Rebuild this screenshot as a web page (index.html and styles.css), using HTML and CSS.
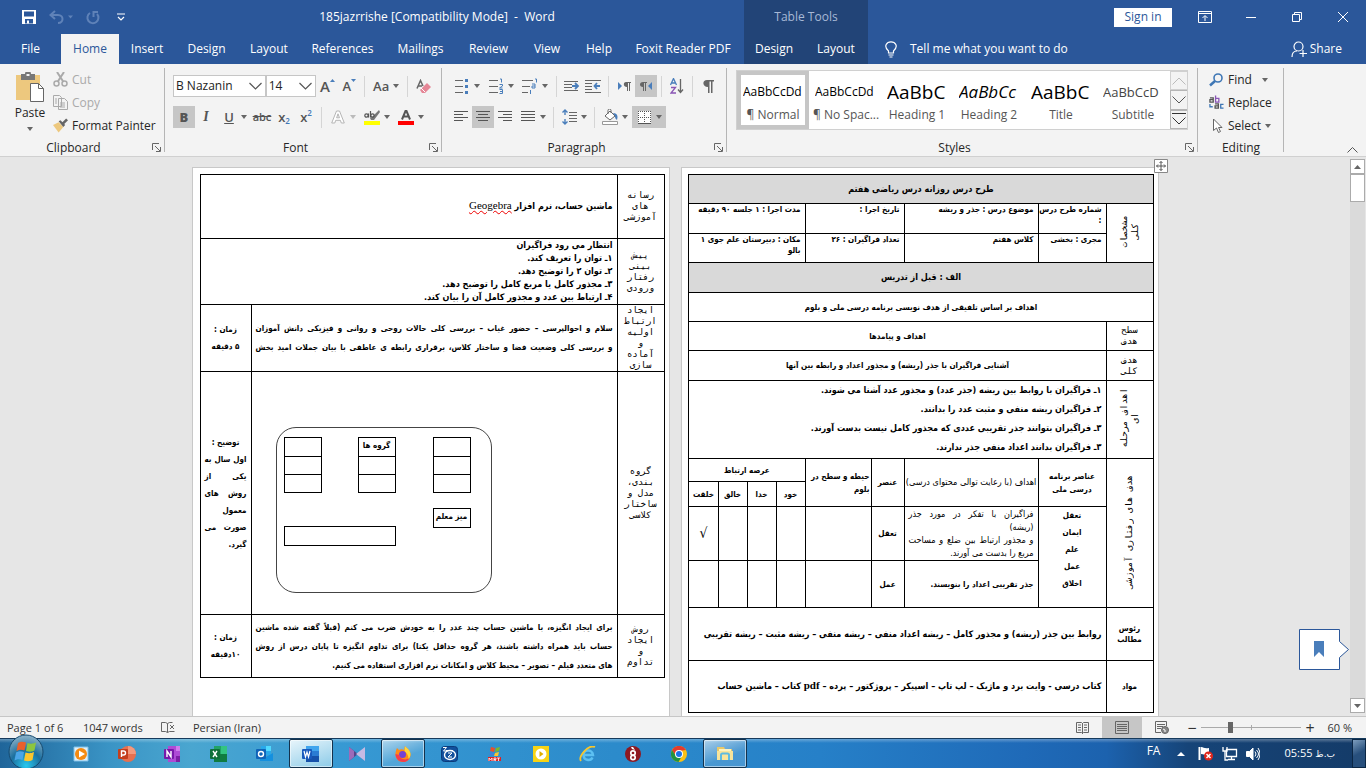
FILE: index.html
```html
<!DOCTYPE html>
<html lang="en">
<head>
<meta charset="utf-8">
<title>185jazrrishe [Compatibility Mode] - Word</title>
<link rel="stylesheet" href="styles.css">
</head>
<body>
<header class="header">
  <div class="title-left">
    <div class="quick">
      <button class="tb" aria-label="Save"><svg width="16" height="16" viewBox="0 0 16 16"><path d="M1 1h14v14H1z" fill="#fff"/><path d="M3 2.500h10v5H3zM4 10h8v4.500H4z" fill="#2b579a"/><path d="M6 11.500h2v3H6z" fill="#fff"/></svg></button>
      <button class="tb wide" aria-label="Undo"><svg width="26" height="16" viewBox="0 0 26 16" fill="none" stroke="#5f82b8" stroke-width="2"><path d="M7 2L2.500 6 7 10M3 6h7c6 0 6 8 0 8"/><path d="M20 6.500h5l-2.500 3z" fill="#5f82b8" stroke="none"/></svg></button>
      <button class="tb" aria-label="Repeat"><svg width="16" height="16" viewBox="0 0 16 16" fill="none" stroke="#5f82b8" stroke-width="2"><path d="M5 4a5.500 5.500 0 1 0 7 1M8 3h5M8.500 2v6"/></svg></button>
      <button class="tb more" aria-label="Customize"><svg width="10" height="8" viewBox="0 0 10 8" fill="none" stroke="#fff" stroke-width="1.200"><path d="M1 1h8M2 4l3 3 3-3"/></svg></button>
    </div>
    <div class="doc-title">185jazrrishe [Compatibility Mode]&nbsp; -&nbsp; Word</div>
  </div>
  <div class="context-title">Table Tools</div>
  <div class="window">
    <button class="signin">Sign in</button>
    <button class="wb" aria-label="Ribbon display"><svg width="14" height="12" viewBox="0 0 14 12" fill="none" stroke="#fff"><path d="M.5 .5h13v11H.5zM.5 2.500h13M7 10V5M4.500 7L7 4.500 9.500 7"/></svg></button>
    <button class="wb" aria-label="Minimize"><svg width="10" height="10" viewBox="0 0 10 10" stroke="#fff"><path d="M0 5.500h10"/></svg></button>
    <button class="wb" aria-label="Restore"><svg width="10" height="10" viewBox="0 0 10 10" fill="none" stroke="#fff"><path d="M.5 2.500h7v7h-7zM2.500 2V.5h7v7H8"/></svg></button>
    <button class="wb" aria-label="Close"><svg width="10" height="10" viewBox="0 0 10 10" stroke="#fff"><path d="M0 0l10 10M10 0L0 10"/></svg></button>
  </div>
  <nav class="tabs">
    <button>File</button><button class="active">Home</button><button>Insert</button><button>Design</button><button>Layout</button><button>References</button><button>Mailings</button><button>Review</button><button>View</button><button>Help</button><button>Foxit Reader PDF</button>
  </nav>
  <nav class="context-tabs"><button>Design</button><button>Layout</button></nav>
  <div class="tell">
    <button class="tellme"><svg width="12" height="17" viewBox="0 0 12 17" fill="none" stroke="#fff" stroke-width="1.200"><path d="M3.500 12V10C-2 5 2 .8 6 .8S14 5 8.500 10v2zM3.500 14h5M4.500 16h3"/></svg><span>Tell me what you want to do</span></button>
    <button class="share"><svg width="16" height="17" viewBox="0 0 16 17" fill="none" stroke="#fff" stroke-width="1.200"><circle cx="7.500" cy="5.500" r="4.500"/><path d="M1 16c0-4 2-6 5-6M12 9v7M8.500 12.500H16"/></svg><span>Share</span></button>
  </div>
</header>

<section class="ribbon">
  <div class="group clipboard">
    <div class="body">
      <button class="paste"><svg width="28" height="30" viewBox="0 0 28 30"><path d="M0 3h24v25H0z" fill="#edc87e"/><path d="M5 2h4a3 3 0 0 1 6 0h4v6H5z" fill="#777"/><path d="M10.500 2h3v2h-3z" fill="#f3f3f3"/><path d="M14.500 11.500h8l5 5v13h-13z" fill="#fff" stroke="#666"/><path d="M22.500 11.500v5h5" fill="none" stroke="#666"/></svg><span>Paste</span><i class="arrow"></i></button>
      <div class="cliplist">
        <button class="off"><svg width="15" height="15" viewBox="0 0 15 15" fill="none" stroke="#aaa" stroke-width="1.500"><path d="M4 0l6.500 10M11 0L4.500 10" stroke-width="2"/><circle cx="3.500" cy="11.500" r="2.500"/><circle cx="11.500" cy="11.500" r="2.500"/></svg>Cut</button>
        <button class="off"><svg width="15" height="15" viewBox="0 0 15 15" fill="#f3f3f3" stroke="#aaa"><path d="M.5 .5h6l2 2v9h-8zM5.500 3.500h6l3 3v8h-9zM2 4h2M2 6h2M2 8h2M7 8h5M7 10h5M7 12h5"/></svg>Copy</button>
        <button><svg width="15" height="15" viewBox="0 0 16 15"><path d="M0 7l6-3 5 5-5 6z" fill="#edc87e"/><path d="M6 3l2-1 5 5-2 2zM10 4l4-4 2 2-4 4z" fill="#666"/></svg>Format Painter</button>
      </div>
    </div>
    <div class="label">Clipboard</div><svg class="launch" width="9" height="9" viewBox="0 0 9 9" fill="none" stroke="#666"><path d="M.5 7V.5H7M3 3l5 5M8.500 4v4.500H4"/></svg>
  </div>
  <div class="group font">
    <div class="body rows">
      <div class="row">
        <label class="combo family"><select aria-label="Font"><option>B Nazanin</option></select><svg width="13" height="8" viewBox="0 0 13 8" fill="none" stroke="#555" stroke-width="1.200"><path d="M.5 1l6 6 6-6"/></svg></label>
        <label class="combo size"><select aria-label="Font size"><option>14</option></select><svg width="13" height="8" viewBox="0 0 13 8" fill="none" stroke="#555" stroke-width="1.200"><path d="M.5 1l6 6 6-6"/></svg></label>
        <button class="ic letter big">A<svg width="5" height="3" viewBox="0 0 5 3"><path d="M0 3l2.500-3L5 3z" fill="#4a7ebb"/></svg></button>
        <button class="ic letter">A<svg width="5" height="3" viewBox="0 0 5 3"><path d="M0 0l2.500 3L5 0z" fill="#4a7ebb"/></svg></button>
        <i class="sep"></i>
        <button class="ic drop letter"><span>Aa</span><i class="arrow"></i></button>
        <i class="sep"></i>
        <button class="ic" aria-label="Clear formatting"><svg width="15" height="15" viewBox="0 0 15 15"><path d="M1 9.500L4.500 1.500 7 7M2.500 7H6" fill="none" stroke="#666" stroke-width="1.500"/><path d="M4 11l7-7 4 4-6 6H6z" fill="#e58696"/><path d="M5 9l4 4" stroke="#fff"/></svg></button>
      </div>
      <div class="row">
        <button class="ic on letter"><b>B</b></button>
        <button class="ic letter serif"><b><em>I</em></b></button>
        <button class="ic drop letter"><span><u>U</u></span><i class="arrow"></i></button>
        <button class="ic letter small"><s>abc</s></button>
        <button class="ic letter">x<sub>2</sub></button>
        <button class="ic letter">x<sup>2</sup></button>
        <i class="sep"></i>
        <button class="ic drop" aria-label="Text effects"><svg width="14" height="14" viewBox="0 0 14 14" fill="#fff" stroke="#b5b5b5" stroke-width="1"><path d="M.7 13L5.500 1h3L13.300 13h-3L9.400 10.300H4.700L3.800 13zM5.600 7.800h2.900L7 3.800z"/></svg><i class="arrow dim"></i></button>
        <button class="ic drop" aria-label="Highlight"><svg width="16" height="15" viewBox="0 0 16 15"><path d="M0 11h16v4H0z" fill="#ff0"/><path d="M15 0l1 2-6 8H7l-1-2 2-1z" fill="#777"/><g fill="none" stroke="#555" stroke-width="1.200"><circle cx="2.500" cy="5.500" r="1.700"/><path d="M4.500 3.500V7.500M6.500 1v6.500"/><circle cx="8.500" cy="5.500" r="1.700"/></g></svg><i class="arrow"></i></button>
        <button class="ic drop" aria-label="Font color"><svg width="16" height="15" viewBox="0 0 16 15"><path d="M0 11h16v4H0z" fill="#f00"/><path d="M4 9.500L7.500 1h1L12 9.500M5.500 6.500h5" fill="none" stroke="#555" stroke-width="2"/></svg><i class="arrow"></i></button>
      </div>
    </div>
    <div class="label">Font</div><svg class="launch" width="9" height="9" viewBox="0 0 9 9" fill="none" stroke="#666"><path d="M.5 7V.5H7M3 3l5 5M8.500 4v4.500H4"/></svg>
  </div>
  <div class="group paragraph">
    <div class="body rows">
      <div class="row">
        <button class="ic drop" aria-label="Bullets"><svg width="14" height="16" viewBox="0 0 14 16"><path d="M0 2.500h8M0 8.500h8M0 14.500h8" stroke="#666"/><path d="M10 1h3v3h-3zM10 7h3v3h-3zM10 13h3v3h-3z" fill="#4a7ebb"/></svg><i class="arrow"></i></button>
        <button class="ic drop" aria-label="Numbering"><svg width="14" height="16" viewBox="0 0 14 16" fill="none" stroke="#666"><path d="M0 2.500h9M0 8.500h9M0 14.500h9"/><path d="M11 1h1.500v3.500M10.500 6.500h3v1.500l-3 2h3M10.500 11.500h3v4h-3M11 13.500h2" stroke="#4a7ebb"/></svg><i class="arrow"></i></button>
        <button class="ic drop" aria-label="Multilevel list"><svg width="16" height="16" viewBox="0 0 16 16" fill="none" stroke="#666"><path d="M0 2.500h11M0 8.500h8M0 14.500h6"/><path d="M13 1h1.500v3.500M10 6h3v4h-3V8h3M8.500 12v4" stroke="#4a7ebb"/></svg><i class="arrow"></i></button>
        <i class="sep"></i>
        <button class="ic" aria-label="Decrease indent"><svg width="16" height="13" viewBox="0 0 16 13" fill="none" stroke="#666"><path d="M0 1.500h14M0 4.500h8M0 7.500h8M0 10.500h14"/><path d="M8 6h6M11 3l3 3-3 3" stroke="#4a7ebb" stroke-width="1.800"/></svg></button>
        <button class="ic" aria-label="Increase indent"><svg width="16" height="13" viewBox="0 0 16 13" fill="none" stroke="#666"><path d="M0 .5h16M0 3.500h7M0 6.500h7M0 9.500h7M0 12.500h16"/><path d="M15 6H10M12 3L9.500 6l2.500 3" stroke="#4a7ebb" stroke-width="1.800"/></svg></button>
        <i class="sep"></i>
        <button class="ic" aria-label="Left to right"><svg width="14" height="10" viewBox="0 0 14 10"><path d="M1 1l4 4-4 4z" fill="#4a7ebb"/><path d="M9 1h5v1h-1v8h-1V2h-1v8h-1V6C6 6 6 1 9 1z" fill="#666"/></svg></button>
        <button class="ic on" aria-label="Right to left"><svg width="14" height="10" viewBox="0 0 14 10"><path d="M13 1L9 5l4 4z" fill="#4a7ebb"/><path d="M4 1h4v1H7v8H6V2H5v8H4V6C0 6 0 1 4 1z" fill="#666"/></svg></button>
        <i class="sep"></i>
        <button class="ic" aria-label="Sort"><svg width="14" height="16" viewBox="0 0 14 16" fill="none"><path d="M.5 7L3.500 .5 6.500 7M1.500 5h4" stroke="#4a7ebb" stroke-width="1.300"/><path d="M1 9.500h4.500L1 15h5" stroke="#8a55b5" stroke-width="1.300"/><path d="M10.500 1v13M8 11.500l2.500 3 2.500-3" stroke="#666" stroke-width="1.300"/></svg></button>
        <i class="sep"></i>
        <button class="ic" aria-label="Show marks"><svg width="11" height="13" viewBox="0 0 11 13"><path d="M4 0h7v1.500H9.500V13H8V1.500H6.500V13H5V7C-1 7-1 0 4 0z" fill="#666"/></svg></button>
      </div>
      <div class="row">
        <button class="ic" aria-label="Align left"><svg width="14" height="12" viewBox="0 0 14 12" stroke="#555"><path d="M0 .5h14M0 3.500h9M0 6.500h14M0 9.500h9"/></svg></button>
        <button class="ic on" aria-label="Center"><svg width="14" height="12" viewBox="0 0 14 12" stroke="#555"><path d="M0 .5h14M2 3.500h10M0 6.500h14M2 9.500h10"/></svg></button>
        <button class="ic" aria-label="Align right"><svg width="14" height="12" viewBox="0 0 14 12" stroke="#555"><path d="M0 .5h14M5 3.500h9M0 6.500h14M5 9.500h9"/></svg></button>
        <button class="ic drop" aria-label="Justify"><svg width="14" height="12" viewBox="0 0 14 12" stroke="#555"><path d="M0 .5h14M0 3.500h14M0 6.500h14M0 9.500h14"/></svg><i class="arrow"></i></button>
        <i class="sep tight"></i>
        <button class="ic drop" aria-label="Line spacing"><svg width="15" height="16" viewBox="0 0 15 16" fill="none" stroke="#666"><path d="M7 3.500h8M7 6.500h8M7 9.500h8M7 12.500h8"/><path d="M3 1v5M.5 3.500L3 1l2.500 2.500M3 15v-5M.5 12.500L3 15l2.500-2.500" stroke="#4a7ebb" stroke-width="1.400"/></svg><i class="arrow"></i></button>
        <i class="sep tight"></i>
        <button class="ic drop" aria-label="Shading"><svg width="17" height="16" viewBox="0 0 17 16" fill="#fff" stroke="#666"><path d="M.5 12.500h15v3H.5z" stroke="#999"/><path d="M3 7l5-5 5 5-5 4zM6 5V1.500a1.500 1.500 0 0 1 3 0V4"/><path d="M11 4c5 0 5 4 4 7-2-1-2-3-2-4z" fill="#4a7ebb" stroke="none"/></svg><i class="arrow"></i></button>
        <button class="ic drop on" aria-label="Borders"><svg width="13" height="13" viewBox="0 0 13 13" fill="none" stroke="#555"><path d="M0 0h13v13H0z" fill="#fff" stroke="none"/><path d="M0 .5h13M.5 0v13M6.500 0v13M12.500 0v13M0 6.500h13" stroke-dasharray="1 1"/><path d="M0 12.500h13"/></svg><i class="arrow"></i></button>
      </div>
    </div>
    <div class="label">Paragraph</div><svg class="launch" width="9" height="9" viewBox="0 0 9 9" fill="none" stroke="#666"><path d="M.5 7V.5H7M3 3l5 5M8.500 4v4.500H4"/></svg>
  </div>
  <div class="group styles">
    <div class="body">
      <div class="gallery">
        <button class="style picked"><span class="sample">AaBbCcDd</span><span>¶ Normal</span></button>
        <button class="style"><span class="sample">AaBbCcDd</span><span>¶ No Spac...</span></button>
        <button class="style"><span class="sample h1">AaBbC</span><span>Heading 1</span></button>
        <button class="style"><span class="sample h2">AaBbCc</span><span>Heading 2</span></button>
        <button class="style"><span class="sample h1">AaBbC</span><span>Title</span></button>
        <button class="style"><span class="sample sub">AaBbCcD</span><span>Subtitle</span></button>
        <div class="spin">
          <button class="off" aria-label="Up"><svg width="14" height="8" viewBox="0 0 14 8" fill="none" stroke="#bbb"><path d="M.5 7.500l6.500-6.500 6.500 6.500"/></svg></button>
          <button aria-label="Down"><svg width="14" height="8" viewBox="0 0 14 8" fill="none" stroke="#555"><path d="M.5 .5l6.500 6.500 6.500-6.500"/></svg></button>
          <button aria-label="More"><svg width="14" height="12" viewBox="0 0 14 12" fill="none" stroke="#333"><path d="M0 .5h14M.5 4.500l6.500 6.500 6.500-6.500"/></svg></button>
        </div>
      </div>
    </div>
    <div class="label">Styles</div><svg class="launch" width="9" height="9" viewBox="0 0 9 9" fill="none" stroke="#666"><path d="M.5 7V.5H7M3 3l5 5M8.500 4v4.500H4"/></svg>
  </div>
  <div class="group editing">
    <div class="body editlist">
      <button><svg width="15" height="14" viewBox="0 0 15 14" fill="none" stroke="#3f77b5"><circle cx="9" cy="5" r="4" stroke-width="1.600"/><path d="M6 8l-5 4.500" stroke-width="2.500"/></svg>Find<i class="arrow far"></i></button>
      <button><svg width="15" height="15" viewBox="0 0 16 15" fill="none" stroke-width="1.400"><g stroke="#555"><path d="M1 2.500h3.500V7H1V4.500h3.500M6.500 9h3.500v4.500H6.500V11h3.500"/></g><path d="M7 0v7h3.500V3H7" stroke="#8a55b5"/><path d="M15.500 9.500h-3v4h3M1 9v3h3" stroke="#3f77b5"/></svg>Replace</button>
      <button><svg width="15" height="16" viewBox="0 0 15 16"><path d="M4.500 1v11.500l3-2.500 2 4.500 2-1-2-4h3.500z" fill="#fff" stroke="#666"/></svg>Select<i class="arrow"></i></button>
    </div>
    <div class="label">Editing</div>
  </div>
  <button class="collapse" aria-label="Collapse"><svg width="11" height="6" viewBox="0 0 11 6" fill="none" stroke="#555"><path d="M.5 5.500l5-5 5 5"/></svg></button>
</section>

<main class="workspace">
  <div class="canvas">
    <article class="page" dir="rtl" lang="fa">
      <table class="plan">
        <colgroup><col class="c-side"><col class="c-main"><col class="c-time"></colgroup>
        <tr class="h64"><th>رسانه<br>های<br>آموزشی</th><td colspan="2" class="start large">ماشین حساب، نرم افزار <span class="latin typo">Geogebra</span></td></tr>
        <tr class="h65"><th>پیش<br>بینی<br>رفتار<br>ورودی</th><td colspan="2" class="start large l13">انتظار می رود فراگیران<br>۱ـ توان را تعریف کند.<br>۲ـ توان ۲ را توضیح دهد.<br>۳ـ مجذور کامل یا مربع کامل را توضیح دهد.<br>۴ـ ارتباط بین عدد و مجذور کامل آن را بیان کند.</td></tr>
        <tr class="h66"><th>ایجاد<br>ارتباط<br>اولیه<br>و<br>آماده<br>سازی</th><td class="just l19">سلام و احوالپرسی – حضور غیاب – بررسی کلی حالات روحی و روانی و فیزیکی دانش آموزان<br>و بررسی کلی وضعیت فضا و ساختار کلاس، برقراری رابطه ی عاطفی با بیان جملات امید بخش</td><td class="l17">زمان :<br>۵ دقیقه</td></tr>
        <tr class="h243"><th>گروه<br>بندی،<br>مدل و<br>ساختار<br>کلاسی</th><td>
          <div class="room" dir="ltr">
            <div class="desk d1"><i></i><i></i><i></i></div>
            <div class="desk d2"><i dir="rtl">گروه ها</i><i></i><i></i></div>
            <div class="desk d3"><i></i><i></i><i></i></div>
            <div class="desk d4"><i dir="rtl">میز معلم</i></div>
            <div class="desk d5"><i></i></div>
          </div></td><td class="just l17"><p>توضیح :</p>اول سال به<br>یکی از<br>روش های<br><span class="end">معمول</span>صورت می<br><span class="end">گیرد.</span></td></tr>
        <tr class="h63"><th>روش<br>ایجاد<br>و<br>تداوم</th><td class="just l19">برای ایجاد انگیزه، با ماشین حساب چند عدد را به خودش ضرب می کنم (قبلاً گفته شده ماشین<br>حساب باید همراه داشته باشند، هر گروه حداقل یکتا) برای تداوم انگیزه تا پایان درس از روش<br><span class="end">های متعدد فیلم – تصویر – محیط کلاس و امکانات نرم افزاری استفاده می کنیم.</span></td><td class="l17">زمان :<br>۱۰دقیقه</td></tr>
      </table>
    </article>
    <article class="page" dir="rtl" lang="fa">
      <svg class="handle" width="14" height="14" viewBox="0 0 14 14" fill="#fff" stroke="#888"><path d="M.5 .5h13v13H.5z"/><path d="M7 2.500v9M2.500 7h9M5.500 4L7 2.500 8.500 4M5.500 10L7 11.500 8.500 10M4 5.500L2.500 7 4 8.500M10 5.500L11.500 7 10 8.500" fill="none" stroke="#555"/></svg>
      <table class="plan">
        <colgroup><col class="c-side"><col class="c-a"><col class="c-b"><col class="c-c"><col class="c-d"><col class="c-e"><col class="c-e"><col class="c-e"><col class="c-e"></colgroup>
        <tr class="h29 shade"><td colspan="9" class="large">طرح درس روزانه درس ریاضی هفتم</td></tr>
        <tr class="h30 info"><th rowspan="2"><span class="vert">مشخصات<br>کلی</span></th><td>شماره طرح درس<br>:</td><td>موضوع درس : جذر و ریشه</td><td colspan="2">تاریخ اجرا :</td><td colspan="4">مدت اجرا : ۱ جلسه ۹۰ دقیقه</td></tr>
        <tr class="h29 info"><td>مجری : بخشی</td><td>کلاس هفتم</td><td colspan="2">تعداد فراگیران : ۲۶</td><td colspan="4">مکان : دبیرستان علم جوی ۱<br>بالو</td></tr>
        <tr class="h30 shade"><td colspan="9" class="large">الف : قبل از تدریس</td></tr>
        <tr class="h29"><td colspan="9">اهداف بر اساس تلفیقی از هدف نویسی برنامه درسی ملی و بلوم</td></tr>
        <tr class="h29"><th>سطح<br>هدف</th><td colspan="8">اهداف و پیامدها</td></tr>
        <tr class="h30"><th>هدف<br>کلی</th><td colspan="8">آشنایی فراگیران با جذر (ریشه) و مجذور اعداد و رابطه بین آنها</td></tr>
        <tr class="h78"><th><span class="vert">اهداف مرحله<br>ای</span></th><td colspan="8" class="start large top l19">۱ـ فراگیران با روابط بین ریشه (جذر عدد) و مجذور عدد آشنا می شوند.<br>۲ـ فراگیران ریشه منفی و مثبت عدد را بدانند.<br>۳ـ فراگیران بتوانند جذر تقریبی عددی که مجذور کامل نیست بدست آورند.<br>۳ـ فراگیران بدانند اعداد منفی جذر ندارند.</td></tr>
        <tr class="h23"><th rowspan="4"><span class="vert">هدف های رفتاری آموزشی</span></th><td rowspan="2">عناصر برنامه<br>درسی ملی</td><td rowspan="2" class="snug regular">اهداف (با رعایت توالی محتوای درسی)</td><td rowspan="2" class="snug">عنصر</td><td rowspan="2" class="start snug">حیطه و سطح در<br>بلوم</td><td colspan="4">عرصه ارتباط</td></tr>
        <tr class="h25"><td class="snug">خود</td><td class="snug">خدا</td><td class="snug">خالق</td><td class="snug">خلقت</td></tr>
        <tr class="h54"><td rowspan="2" class="top l17">تعقل<br>ایمان<br>علم<br>عمل<br>اخلاق</td><td class="just regular l13">فراگیران با تفکر در مورد جذر (ریشه)<br>و مجذور ارتباط بین ضلع و مساحت<br><span class="end">مربع را بدست می آورند.</span></td><td class="snug">تعقل</td><td></td><td></td><td></td><td></td><td class="check">√</td></tr>
        <tr class="h47"><td class="start">جذر تقریبی اعداد را بنویسند.</td><td class="snug">عمل</td><td></td><td></td><td></td><td></td><td></td></tr>
        <tr class="h53"><th class="plain">رئوس<br>مطالب</th><td colspan="8" class="start large">روابط بین جذر (ریشه) و مجذور کامل – ریشه اعداد منفی – ریشه منفی – ریشه مثبت – ریشه تقریبی</td></tr>
        <tr class="h52"><th class="plain">مواد</th><td colspan="8" class="start large">کتاب درسی - وایت برد و ماژیک – لپ تاپ – اسپیکر – پروژکتور – پرده – <span class="latin">pdf</span> کتاب – ماشین حساب</td></tr>
      </table>
    </article>
    <button class="bookmark" aria-label="Bookmark"><svg width="52" height="43" viewBox="0 0 52 43"><path d="M1.500 1.500h40v12l9 8-9 8v12h-40z" fill="#fff" stroke="#2b579a"/><path d="M16 13h10v16l-5-5-5 5z" fill="#4a7ebb"/></svg></button>
  </div>
  <div class="vscroll"><button aria-label="Scroll up"><svg width="7" height="4"><path d="M0 4l3.500-4L7 4z" fill="#666"/></svg></button><div class="track"><i class="thumb"></i></div><button aria-label="Scroll down"><svg width="7" height="4"><path d="M0 0l3.500 4L7 0z" fill="#666"/></svg></button></div>
</main>

<footer class="status">
  <span class="s-page">Page 1 of 6</span><span class="s-words">1047 words</span>
  <svg class="s-book" width="15" height="13" viewBox="0 0 15 13" fill="none" stroke="#666"><path d="M.5 1.500h4l2 1v9l-2-1h-4zM6.500 2.500l2-1h3M6.500 11.500l2-1h5M9 4l4 4M13 4L9 8"/></svg>
  <span>Persian (Iran)</span>
  <div class="views">
    <button aria-label="Read mode"><svg width="13" height="12" viewBox="0 0 13 12" fill="none" stroke="#666"><path d="M.5 .5h5l1 1 1-1h5v10h-5l-1 1-1-1h-5zM6.500 1v11M2 3h3M2 5.500h3M2 8h3M8 3h3M8 5.500h3M8 8h3"/></svg></button>
    <button class="on" aria-label="Print layout"><svg width="14" height="13" viewBox="0 0 14 13" fill="none" stroke="#666"><path d="M.5 .5h13v12H.5zM2 3.500h10M2 5.500h10M2 7.500h10M2 9.500h10"/></svg></button>
    <button aria-label="Web layout"><svg width="14" height="13" viewBox="0 0 14 13" fill="none" stroke="#666"><path d="M6 11.500H.5V.5h11V5M2 3.500h8M2 5.500h6M2 7.500h4"/><circle cx="10" cy="9" r="3.500" fill="#888"/><path d="M8 8l2 1v2" stroke="#fff"/></svg></button>
  </div>
  <div class="zoom"><button aria-label="Zoom out">−</button><input type="range" min="0" max="100" value="28" aria-label="Zoom"><button aria-label="Zoom in">+</button></div>
  <span class="s-pct">60 %</span>
</footer>

<div class="taskbar">
  <button class="start-orb" aria-label="Start"><svg width="36" height="34" viewBox="0 0 36 34"><defs><radialGradient id="orb" cx=".5" cy=".9" r=".9"><stop offset="0" stop-color="#27c9ef"/><stop offset=".5" stop-color="#1b6f9f"/><stop offset="1" stop-color="#8fb3c9"/></radialGradient></defs><circle cx="18" cy="18" r="17" fill="url(#orb)" stroke="#154a70"/><path d="M10 9c3-2 5-1.500 8-.5l-1.500 8c-3-1-5-1-8 .5z" fill="#e8602c"/><path d="M19.500 9c3 1 5 1 8.500-.5l-1.500 8c-3 1.500-5 1.500-8.500 .5z" fill="#8cc63f"/><path d="M8 18.500c3-1.500 5-1.500 8-.5l-1.500 8c-3-1-5-1-8 .5z" fill="#4aa5e8"/><path d="M17.500 18.500c3 1 5 1 8.500-.5L24.500 26c-3 1.500-5 1.500-8.500 .5z" fill="#fcc62d"/></svg></button>
  <div class="apps">
    <button aria-label="Media player"><svg width="16" height="16" viewBox="0 0 16 16"><path d="M1 1h14v14H1z" fill="#dff0fa" stroke="#7fc0e8"/><circle cx="8" cy="8" r="6" fill="#f58b12"/><path d="M6 4.500v7L12 8z" fill="#fff"/></svg></button>
    <button aria-label="PowerPoint"><svg width="18" height="16" viewBox="0 0 18 16"><circle cx="10" cy="8" r="8" fill="#e8704f"/><path d="M10 0a8 8 0 0 1 8 8h-8z" fill="#f5997c"/><rect y="3" width="10" height="10" rx="1" fill="#c43e1c"/><path d="M3.500 11V5h2a2 2 0 0 1 0 4h-2" fill="none" stroke="#fff" stroke-width="1.400"/></svg></button>
    <button aria-label="OneNote"><svg width="18" height="16" viewBox="0 0 18 16"><path d="M4 0h12v16H4z" fill="#ae4bd5"/><path d="M12 0h4v5h-4z" fill="#ce7ced"/><path d="M12 10h4v6h-4z" fill="#7d1fa5"/><rect y="3" width="10" height="10" rx="1" fill="#7719aa"/><path d="M3 11V5l4 6V5" fill="none" stroke="#fff" stroke-width="1.400"/></svg></button>
    <button aria-label="Excel"><svg width="18" height="16" viewBox="0 0 18 16"><path d="M4 0h13v16H4z" fill="#21a366"/><path d="M11 0h6v8h-6z" fill="#33c481"/><path d="M4 8h13v8H4z" fill="#107c41"/><rect y="3" width="10" height="10" rx="1" fill="#0f703b"/><path d="M3 5l4 6M7 5l-4 6" stroke="#fff" stroke-width="1.400"/></svg></button>
    <button aria-label="Outlook"><svg width="18" height="16" viewBox="0 0 18 16"><path d="M5 0h10v9H5z" fill="#28a8ea"/><path d="M4 8l6 3 7-4v8H4z" fill="#1490df"/><path d="M10 0h5v5h-5z" fill="#50d9ff"/><rect y="3" width="10" height="10" rx="1" fill="#0f64b8"/><circle cx="5" cy="8" r="2.500" fill="none" stroke="#fff" stroke-width="1.400"/></svg></button>
    <button class="open front" aria-label="Word"><svg width="18" height="16" viewBox="0 0 18 16"><path d="M4 0h13v5H4z" fill="#41a5ee"/><path d="M4 5h13v5H4z" fill="#2b7cd3"/><path d="M4 10h13v6H4z" fill="#1651aa"/><rect y="3" width="10" height="10" rx="1" fill="#185abd"/><path d="M2 5l1.500 6L5 6l1.500 5L8 5" fill="none" stroke="#fff" stroke-width="1.200"/></svg></button>
    <button aria-label="Media editor"><svg width="16" height="16" viewBox="0 0 16 16"><path d="M0 1l9 7-9 7z" fill="#54468c"/><path d="M16 1L7 8l9 7z" fill="#c5bae4"/><path d="M0 1l5 4v6l-5 4z" fill="#9d6bb9"/></svg></button>
    <button class="open" aria-label="Firefox"><svg width="16" height="16" viewBox="0 0 16 16"><path d="M10 0c1 2 5 3 5.500 8S12 16 8 16 0 13 .5 7C1 5 1 4 2 2l2 2c2-1 3-1 5 0z" fill="#ff8a16"/><path d="M10 0c1 2 5 3 5.500 8 0 2-1 4-2 5 0-4-2-6-4-8z" fill="#ffd53a"/><circle cx="7.500" cy="8.500" r="3.500" fill="#7541d4"/><path d="M.5 8c0 5 4 8 8 8 3 0 5-2 6-4-4 3-10 1-10-3z" fill="#f33c4e"/></svg></button>
    <button aria-label="Z client"><svg width="17" height="16" viewBox="0 0 17 16"><rect x=".5" y=".5" width="16" height="15" rx="3" fill="#12509c" stroke="#0a3b7c"/><ellipse cx="9" cy="9" rx="5.500" ry="4.500" fill="none" stroke="#fff" stroke-width="1.400"/><path d="M7 7h4l-4 4h4M2 1.500h3.500L2.500 5H6M5 4.500h7" fill="none" stroke="#fff"/></svg></button>
    <button aria-label="MRT"><svg width="14" height="16" viewBox="0 0 14 16"><path d="M3 1l4 1-1 4-4-1z" fill="#e8502c"/><path d="M8 2l4-1-1 4-4 1z" fill="#7ab82d"/><path d="M2 6l4 1-1 3-4-1z" fill="#3e83d8"/><path d="M7 7l4-1-1 4-4 0z" fill="#fcc62d"/><path d="M0 11h13v4H0z" fill="#d22"/><path d="M1 15v-3l1.500 2L4 12v3M6 15v-3h2v1.500H6L8 15M9 12h3M10.500 12v3" fill="none" stroke="#fff" stroke-width=".8"/></svg></button>
    <button aria-label="Player"><svg width="16" height="16" viewBox="0 0 16 16"><path d="M0 0h16v16H0z" fill="#f7d314"/><circle cx="8" cy="8" r="5.500" fill="#fff"/><path d="M6.500 5v6l4-3z" fill="#e0ad00"/></svg></button>
    <button aria-label="Internet Explorer"><svg width="17" height="16" viewBox="0 0 17 16" fill="none"><path d="M13.500 11.500c-2 4-9 3-9-2.500 0-6 9-6 9.500 0H5" stroke="#5cc0f2" stroke-width="2.500"/><path d="M2 15C-1 11 9-2 16 1" stroke="#f8c62c" stroke-width="1.800"/></svg></button>
    <button aria-label="Dictionary"><svg width="16" height="16" viewBox="0 0 16 16"><circle cx="8" cy="8" r="8" fill="#8e1821"/><g fill="none" stroke="#fff" stroke-width="1.700"><circle cx="8" cy="7" r="2.200"/><circle cx="8" cy="11.500" r="2.200"/></g><path d="M6 1h2l2 3-3-1z" fill="#fff"/></svg></button>
    <button aria-label="Chrome"><svg width="16" height="16" viewBox="0 0 16 16"><circle cx="8" cy="8" r="8" fill="#fbc116"/><path d="M1 4a8 8 0 0 1 14 0l-7 1-3 5z" fill="#e33b2e"/><path d="M1 4a8 8 0 0 0 6.500 12L11 10H5z" fill="#229342"/><circle cx="8" cy="8" r="4" fill="#fff"/><circle cx="8" cy="8" r="3" fill="#1a73e8"/></svg></button>
    <button class="open" aria-label="Explorer"><svg width="16" height="15" viewBox="0 0 16 15"><path d="M0 1h7l1 2h7v11H0z" fill="#e8c868"/><path d="M2 3h12v3H2z" fill="#fdf3c0"/><path d="M0 5h16v9H0z" fill="#f8e49b"/><path d="M4 14V9q0-1.500 1.500-1.500h5q1.500 0 1.500 1.500v5" fill="none" stroke="#5fbbe0" stroke-width="2"/></svg></button>
  </div>
  <div class="tray">
    <span class="lang">FA</span>
    <svg class="up" width="8" height="4"><path d="M0 4l4-4 4 4z" fill="#fff"/></svg>
    <svg width="16" height="15" viewBox="0 0 16 15"><path d="M1.500 1v13" stroke="#fff" stroke-width="2"/><path d="M3 1c3 0 3 2 8 1v7c-4 1-4-1-8-1z" fill="#fff"/><circle cx="10.500" cy="10" r="4.500" fill="#e0261c"/><path d="M8.500 8l4 4M12.500 8l-4 4" stroke="#fff" stroke-width="1.500"/></svg>
    <svg width="16" height="15" viewBox="0 0 16 15" fill="none" stroke="#fff"><path d="M4.500 3.500h10v7h-10zM9.500 11v2.500M6 13.500h7" stroke-width="1.300"/><path d="M1 1v4h4V1M3 5v9h3" stroke-width="1.300"/></svg>
    <svg width="14" height="14" viewBox="0 0 14 14" fill="none" stroke="#fff"><path d="M.5 4.500h3l3.500-3.500v12L3.500 9.500h-3z" fill="#fff"/><path d="M9 4.500q2 2.500 0 5M10.500 3q4 4 0 8M12 1q4 6 0 12"/></svg>
    <span class="clock">05:55 <bdi>ب.ظ</bdi></span>
    <button class="desktop" aria-label="Show desktop"></button>
  </div>
</div>
</body>
</html>
```
FILE: styles.css
```css
* { box-sizing: border-box; }
html, body { height: 100%; margin: 0; }
body { display: flex; flex-direction: column; overflow: hidden; font: 12px/16px "Open Sans", "Noto Sans", sans-serif; color: #262626; background: #e6e6e6; }
button { font: inherit; color: inherit; background: none; border: 0; padding: 0; margin: 0; display: flex; align-items: center; justify-content: center; white-space: nowrap; }
i { font-style: normal; }
svg { display: block; flex: none; }

.header { display: grid; grid-template-columns: 744px 124px 1fr; grid-template-rows: 34px 30px; background: #2b579a; color: #fff; flex: none; }
.title-left { display: flex; align-items: center; }
.quick { display: flex; align-items: center; width: 194px; padding-left: 18px; gap: 6px; }
.tb { width: 22px; height: 24px; }
.tb.wide { width: 30px; }
.doc-title { flex: 1; text-align: center; padding-right: 64px; }
.context-title { background: #224477; color: #a8b9d6; display: flex; align-items: center; justify-content: center; }
.window { display: flex; align-items: center; justify-content: flex-end; }
.signin { background: #fff; color: #2b579a; width: 58px; height: 19px; margin-right: 10px; }
.wb { width: 46px; height: 30px; }
.tabs { display: grid; grid-template-columns: 61px 58px 56px 63px 62px 85px 71px 65px 52px 52px 116px; }
.tabs .active { background: #f3f3f3; color: #2b579a; }
.context-tabs { background: #224477; display: grid; grid-template-columns: 60px 1fr; }
.tell { display: flex; justify-content: space-between; padding: 0 24px 0 17px; }
.tellme { gap: 13px; }
.share { gap: 3px; }

.ribbon { display: flex; background: #f3f3f3; height: 93px; border-bottom: 1px solid #d0d0d0; flex: none; position: relative; }
.group { position: relative; display: flex; flex-direction: column; justify-content: space-between; padding: 6px 0 0; }
.group::after { content: ""; position: absolute; right: 0; top: 4px; bottom: 4px; width: 1px; background: #b5b5b5; }
.label { text-align: center; }
.launch { position: absolute; right: 4px; bottom: 4px; }
.clipboard { width: 165px; }
.font { width: 277px; }
.paragraph { width: 285px; }
.styles { width: 471px; }
.editing { width: 86px; }
.clipboard .body { display: flex; padding-left: 10px; }
.clipboard .label { padding-right: 18px; }
.font .label, .paragraph .label, .styles .label { padding-right: 16px; }
.paste { flex-direction: column; width: 40px; height: 64px; justify-content: flex-start; padding-top: 2px; }
.paste span { margin: 3px 0 6px; }
.cliplist { display: flex; flex-direction: column; margin: -2px 0 0 3px; }
.cliplist button { height: 23px; justify-content: flex-start; gap: 4px; }
.off { color: #aaa; }
.arrow { width: 0; height: 0; border: 3px solid transparent; border-top: 4px solid #666; border-bottom: 0; flex: none; }
.arrow.dim { border-top-color: #bbb; }
.rows { display: flex; flex-direction: column; gap: 9px; padding: 5px 8px 0; }
.row { display: flex; align-items: center; height: 22px; }
.combo { display: grid; height: 22px; border: 1px solid #c6c6c6; background: #fff; align-items: center; }
.combo select { grid-area: 1 / 1; appearance: none; border: 0; background: none; font: inherit; padding: 0 2px; color: #222; width: 100%; height: 20px; outline: 0; }
.combo svg { grid-area: 1 / 1; justify-self: end; margin-right: 3px; pointer-events: none; }
.family { width: 93px; }
.size { width: 51px; }
.ic { width: 22px; height: 22px; }
.ic.drop { width: 34px; justify-content: flex-start; }
.ic.drop > :first-child { margin: 0 auto; }
.ic.drop .arrow { margin-right: 4px; }
.on { background: #c6c6c6; }
.sep { width: 1px; height: 21px; background: #d5d5d5; margin: 0 4px; }
.sep.tight { margin: 0 3px; }
.letter { font-weight: 600; color: #555; font-size: 13px; }
.letter svg { align-self: flex-start; margin-top: 4px; }
.letter.big { font-size: 15px; }
.letter.small { font-size: 11px; }
.serif { font-family: "Liberation Serif", serif; font-size: 14px; }
sub, sup { font-size: 8px; line-height: 8px; color: #3f77b5; }
sub { align-self: flex-end; margin-bottom: 3px; }
sup { align-self: flex-start; margin-top: 3px; }

.styles .body { padding: 0 10px 0 9px; }
.gallery { display: flex; height: 60px; border: 1px solid #d0d0d0; background: #fff; }
.style { width: 72px; flex-direction: column; align-items: stretch; border: 4px solid #fff; color: #555; }
.style.picked { border-color: #c6c6c6; }
.style span { text-align: center; }
.style .sample { height: 28px; line-height: 30px; color: #000; overflow: hidden; text-align: left; font-size: 12px; margin: 0 2px 2px; }
.style .h1 { font-size: 19px; }
.style .h2 { font-size: 17px; font-style: italic; }
.style .sub { font-size: 13px; color: #444; }
.spin { margin-left: auto; width: 17px; display: grid; grid-template-rows: 1fr 1fr 1fr; background: #f3f3f3; }
.spin button { border: 1px solid #b5b5b5; border-right: 0; overflow: hidden; }
.spin .off { border-color: #d0d0d0; }
.editlist { display: flex; flex-direction: column; padding-left: 11px; margin-top: -2px; }
.editlist button { height: 23px; justify-content: flex-start; gap: 4px; }
.arrow.far { margin-left: 6px; }
.collapse { position: absolute; right: 8px; bottom: 3px; }

.workspace { flex: 1; min-height: 0; display: flex; }
.canvas { flex: 1; position: relative; overflow: hidden; display: flex; justify-content: center; gap: 11px; padding-top: 10px; }
.page { position: relative; width: 478px; height: 676px; background: #fff; border: 1px solid #c8c8c8; padding: 6px 0 0; flex: none; }
.plan { border-collapse: collapse; table-layout: fixed; width: 465px; margin-right: 4px; font: bold 8px/13px "DejaVu Sans Condensed", "DejaVu Sans", sans-serif; color: #000; }
.plan td, .plan th { border: 1px solid #000; padding: 0 4px; text-align: center; vertical-align: middle; height: inherit; white-space: nowrap; }
.plan th { font: 9px/11px "DejaVu Sans Mono", monospace; padding: 0; }
.plan th.plain { font: bold 8px/11px "DejaVu Sans Condensed", "DejaVu Sans", sans-serif; }
.plan .snug { padding: 0 1px; }
.plan .large { font-size: 9px; }
.plan .regular { font-size: 9px; font-weight: normal; }
.c-side { width: 47px; } .c-main { width: 366px; } .c-time { width: 51px; }
.c-a { width: 68px; } .c-b { width: 134px; } .c-c { width: 33px; } .c-d { width: 66px; } .c-e { width: 29px; }
.h23 { height: 23px; } .h25 { height: 25px; } .h29 { height: 29px; } .h30 { height: 30px; } .h47 { height: 47px; }
.h52 { height: 52px; } .h53 { height: 53px; } .h54 { height: 54px; } .h63 { height: 63px; } .h64 { height: 64px; }
.h65 { height: 65px; } .h66 { height: 66px; } .h78 { height: 78px; } .h243 { height: 243px; }
.shade td { background: #d9d9d9; }
.plan .info td { text-align: right; vertical-align: top; line-height: 11px; }
.plan .start { text-align: right; }
.plan .top { vertical-align: top; }
.plan .just { text-align: justify; text-align-last: justify; white-space: normal; }
.end { display: block; text-align-last: right; }
.just p { margin: 0; text-align-last: center; }
.l13 { line-height: 13px; } .l17 { line-height: 17px; } .l19 { line-height: 19px; }
.latin { font-family: "Liberation Serif", serif; font-size: 11px; line-height: 11px; }
.typo { font-weight: normal; text-decoration: underline wavy #e00 1px; }
.check { font-size: 14px; font-weight: normal; }
.vert { display: inline-block; writing-mode: vertical-rl; transform: rotate(180deg); }
.handle { position: absolute; right: -10px; top: -9px; }
.room { position: relative; width: 216px; height: 166px; border: 1px solid #444; border-radius: 20px; margin: 34px auto 0 20px; }
.desk { position: absolute; width: 38px; border: 1px solid #000; }
.desk i { display: block; height: 18px; line-height: 16px; }
.desk i + i { border-top: 1px solid #000; }
.d1 { left: 7px; top: 9px; } .d2 { left: 81px; top: 9px; } .d3 { left: 156px; top: 9px; }
.d4 { left: 156px; top: 80px; } .d5 { left: 7px; top: 98px; width: 112px; }
.bookmark { position: absolute; right: 0; bottom: 45px; }
.vscroll { width: 16px; display: flex; flex-direction: column; padding: 2px 1px 3px 0; }
.vscroll button { height: 15px; background: #fff; border: 1px solid #ababab; }
.track { flex: 1; background: #dadada; }
.thumb { display: block; height: 28px; background: #fff; border: 1px solid #ababab; }

.status { display: flex; align-items: center; height: 22px; background: #f3f3f3; border-top: 1px solid #c6c6c6; padding: 0 14px 0 7px; font-size: 11px; flex: none; color: #333; }
.s-page { width: 76px; } .s-words { width: 78px; } .s-book { margin-right: 17px; }
.views { margin-left: auto; display: flex; height: 21px; }
.views button { width: 40px; height: 21px; }
.zoom { display: flex; align-items: center; margin-left: 4px; }
.zoom button { width: 12px; font-size: 16px; }
.zoom input { appearance: none; width: 100px; height: 12px; margin: 0 3px; background: linear-gradient(#aaa, #aaa) 50% 50% / 100% 1px no-repeat, linear-gradient(#aaa, #aaa) 50% 50% / 1px 5px no-repeat; }
.zoom input::-webkit-slider-thumb { appearance: none; width: 5px; height: 11px; background: #666; }
.s-pct { width: 36px; text-align: right; white-space: nowrap; }

.taskbar { display: flex; height: 30px; flex: none; border-top: 1px solid #163a5c; background: linear-gradient(rgba(255,255,255,.3), rgba(255,255,255,0) 4px), linear-gradient(90deg, #1f659a, #3a94c5 8%, #4aa6d0 14%, #3799d3 25%, #2c8bcb 45%, #2680c8 60%, #1f6ab8 75%, #1c62ae 81%, #164478 87%, #143b68 100%); color: #fff; }
.start-orb { width: 59px; height: 34px; margin-top: -5px; padding-right: 7px; z-index: 1; }
.apps { display: flex; gap: 2px; height: 29px; }
.apps button { width: 44px; border-radius: 2px; }
.apps .open { border: 1px solid #14324d; box-shadow: inset 0 0 0 1px rgba(255,255,255,.5); background: linear-gradient(160deg, rgba(255,255,255,.6), rgba(255,255,255,.15) 60%); }
.apps .front { background: linear-gradient(160deg, #e8f5fb, #8ccbe8); }
.tray { display: flex; align-items: center; margin-left: auto; gap: 8px; }
.lang { margin: -6px 9px 0 0; }
.up { margin-right: 5px; }
.clock { margin: 0 9px 0 16px; white-space: nowrap; font-size: 11px; }
.clock bdi { font-family: "DejaVu Sans", sans-serif; font-size: 9px; }
.desktop { width: 14px; height: 29px; border: 1px solid #0b2745; background: linear-gradient(150deg, #7d9dbd, #274f7c 50%); }
```
